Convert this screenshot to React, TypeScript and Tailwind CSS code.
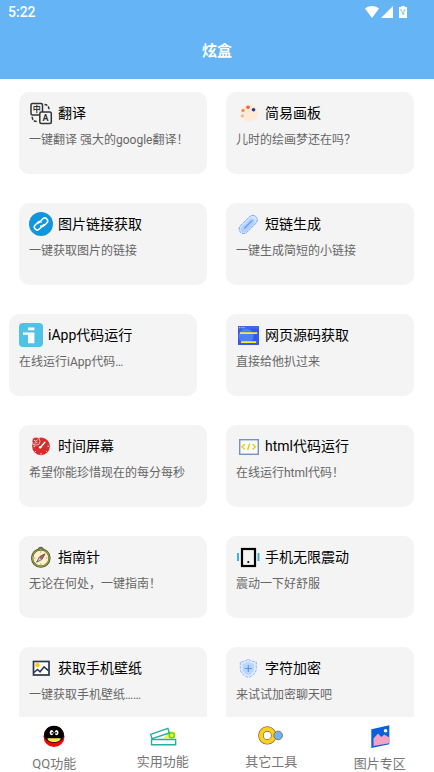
import React, { useState } from 'react';

interface Tool {
  title: string;
  desc: string;
  icon: React.ReactNode;
  className?: string;
}

interface Tab {
  label: string;
  icon: React.ReactNode;
}

const iconClass = 'w-6 h-6 shrink-0';

const TranslateIcon = () => (
  <svg viewBox="0 0 24 24" className={iconClass} fill="none" stroke="#333" strokeWidth="1.5" aria-hidden="true">
    <rect x="2" y="2.5" width="11.5" height="11.5" rx="1.5" />
    <rect x="10.8" y="11" width="11.5" height="11.5" rx="1.5" fill="#f4f4f4" />
    <path d="M15.500 3.500c2.600 0 4.500 1.800 4.500 4.800" strokeDasharray="3 1.200" />
    <path d="M3.200 15.800c0 3 1.900 4.800 5 4.800" strokeDasharray="3 1.200" />
    <text x="7.8" y="11.2" fontSize="8" fontWeight="700" textAnchor="middle" fill="#333" stroke="none">中</text>
    <text x="16.6" y="20.1" fontSize="9" fontWeight="700" textAnchor="middle" fill="#333" stroke="none">A</text>
  </svg>
);

const PaletteIcon = () => (
  <svg viewBox="0 0 24 24" className={iconClass} aria-hidden="true">
    <path d="M13.500 3.500a8.600 8.600 0 1 1-5 15.600c-1.400-1 .6-2.100-.3-3.200-.8-1-2.600.2-2.800-2.200C4.800 8 8.500 3.500 13.500 3.500z" fill="#feead6" />
    <circle cx="7" cy="9.400" r="1.700" fill="#fd8a4c" />
    <circle cx="12" cy="6.300" r="1.800" fill="#fb5f3b" />
    <circle cx="17.500" cy="8.700" r="1.800" fill="#2f3689" />
    <circle cx="6.300" cy="14.900" r="1.600" fill="#fcb37c" />
  </svg>
);

const LinkIcon = () => (
  <svg viewBox="0 0 24 24" className={iconClass} fill="none" aria-hidden="true">
    <circle cx="12" cy="12" r="12" fill="#1296db" />
    <g stroke="#fff" strokeWidth="1.500" strokeLinecap="round" transform="translate(12 12) rotate(-45)">
      <path d="M1.800 2.400H-4.800a2.900 2.900 0 0 1 0-5.800H-1.200a2.900 2.900 0 0 1 2.800 2.200" />
      <path d="M-1.800-2.400H4.800a2.900 2.900 0 0 1 0 5.800H1.200a2.900 2.900 0 0 1-2.800-2.200" />
    </g>
  </svg>
);

const ClipIcon = () => (
  <svg viewBox="0 0 24 24" className={iconClass} fill="none" aria-hidden="true">
    <g transform="translate(12.200 12.500) rotate(-45)">
      <rect x="-11" y="-4.600" width="22" height="9.200" rx="4.600" fill="#d3e3fe" stroke="#5b9af8" strokeWidth=".8" strokeDasharray="3 .8" />
      <rect x="-9.500" y="-2.800" width="17" height="6.600" rx="3.300" fill="#b3cffd" />
      <path d="M-5 0H5.500" stroke="#5f9cf8" strokeWidth="1.300" strokeLinecap="round" />
    </g>
  </svg>
);

const IAppIcon = () => (
  <svg viewBox="0 0 24 24" className={iconClass} aria-hidden="true">
    <rect width="24" height="24" rx="4" fill="#4ec3e6" />
    <path d="M9 4.600h6.400v2.600H9zM4 9.500h11.400v10.700H9v-8.500H4z" fill="#fff" />
  </svg>
);

const WebSourceIcon = () => (
  <svg viewBox="0 0 24 24" className={iconClass} aria-hidden="true">
    <rect x="2" y="3" width="21" height="19" rx=".5" fill="#3558f5" />
    <circle cx="10" cy="13" r="7.500" fill="#4a80fb" />
    <path d="M2 3h21v2.500H2z" fill="#4466e8" />
    <path d="M3 4h1.300v1.200H3zM5.200 4h1.300v1.200H5.200zM7.400 4h1.300v1.200H7.400z" fill="#e8b94a" />
    <path d="M4 9.200h17.200V11H4zM5 18.200h15.200V20H5z" fill="#ffee1a" />
  </svg>
);

const ClockIcon = () => (
  <svg viewBox="0 0 24 24" className={iconClass} fill="none" aria-hidden="true">
    <circle cx="12" cy="12.300" r="8.900" fill="#dc2b2f" />
    <path d="M12 19v1.500M18.500 12.300h1.500M4.500 12.300H6M17 17l.8.8M6.800 17.200l-.8.8" stroke="#fff" strokeWidth=".9" />
    <path d="M11.300 13.500l4.600-5.300" stroke="#fff" strokeWidth="1.300" strokeLinecap="round" />
    <circle cx="11.200" cy="13.200" r="1.300" fill="#fff" />
    <circle cx="7" cy="7.200" r="4" fill="#dc2b2f" stroke="#f9d9d9" strokeWidth=".8" />
    <path d="M5 6.200l2 1.200 1.800-2M5.500 9.200l2.800-.8" stroke="#fff" strokeWidth=".8" />
  </svg>
);

const HtmlIcon = () => (
  <svg viewBox="0 0 24 24" className={iconClass} fill="none" aria-hidden="true">
    <rect x="3.700" y="5.700" width="18.600" height="14.600" fill="#fafafa" stroke="#7391c8" strokeWidth="1.400" />
    <path d="M8.800 10.200L6 12.800l2.800 2.600M16.600 10.200l2.800 2.600-2.800 2.600M13.800 9.600l-2.200 6.400" stroke="#e3cf0c" strokeWidth="1.400" />
  </svg>
);

const CompassIcon = () => (
  <svg viewBox="0 0 24 24" className={iconClass} fill="none" aria-hidden="true">
    <path d="M9.500 4.600a2.300 2.300 0 0 1 4.600 0" stroke="#5b6b4a" strokeWidth="1.200" />
    <circle cx="11.800" cy="13" r="8.700" fill="#fff0cd" stroke="#4a4f2c" strokeWidth="2.200" />
    <circle cx="11.800" cy="13" r="8.500" stroke="#98a83c" strokeWidth="1.100" />
    <path d="M11.800 6.500v1M11.800 18.500v1M5.300 13h1M17.300 13h1" stroke="#6b6b50" strokeWidth=".8" />
    <path d="M16 8.800l-2.700 5.200-2.500-2.500z" fill="#e4574c" stroke="#413c3c" strokeWidth=".7" />
    <path d="M7.600 17.200l2.700-5.200 2.500 2.500z" fill="#c9ced6" stroke="#413c3c" strokeWidth=".7" />
  </svg>
);

const VibrateIcon = () => (
  <svg viewBox="0 0 24 24" className={iconClass} fill="none" aria-hidden="true">
    <rect x="6" y="4" width="13" height="17" stroke="#000" strokeWidth="2.200" />
    <circle cx="12.300" cy="17" r="1.100" fill="#000" />
    <path d="M2 8v8M22.500 8v8" stroke="#29abe2" strokeWidth="1.800" />
  </svg>
);

const WallpaperIcon = () => (
  <svg viewBox="0 0 24 24" className={iconClass} fill="none" aria-hidden="true">
    <rect x="4.500" y="5.500" width="15.500" height="13.500" fill="#fff" stroke="#2b3650" strokeWidth="1.700" />
    <circle cx="8.500" cy="9" r="2.300" fill="#ffcb05" />
    <path d="M5 16.500l3.500-3 2.500 2.300 4-5 4.500 3.800" stroke="#2b3650" strokeWidth="1.600" />
  </svg>
);

const ShieldIcon = () => (
  <svg viewBox="0 0 24 24" className={iconClass} fill="none" aria-hidden="true">
    <path d="M12.300 3.300c2.300 1.700 5 2.500 8 2.700v6.500c0 4.500-3.500 7.300-8 9-4.500-1.700-8-4.500-8-9V6c3-.2 5.700-1 8-2.700z" fill="#e0ecff" stroke="#73a9fa" strokeWidth=".8" strokeDasharray="3 1" />
    <path d="M12.300 5.800c1.800 1.200 3.700 1.700 5.800 2v4.700c0 3.400-2.400 5.300-5.800 6.700-3.400-1.400-5.800-3.300-5.800-6.700V7.800c2.100-.3 4-.8 5.800-2z" fill="#b9d4fe" />
    <path d="M12.300 9v7M8.800 12.500h7" stroke="#4f93f7" strokeWidth="1.100" />
  </svg>
);

const QQIcon = () => (
  <svg viewBox="0 0 24 24" className={iconClass} aria-hidden="true">
    <circle cx="12" cy="11.500" r="10.500" fill="#f00" />
    <path d="M12 .8c5.700 0 9.900 4.200 9.900 9.400 0 4.300-4.200 7.500-9.900 7.500s-9.900-3.200-9.900-7.500C2.100 5 6.300.8 12 .8z" fill="#000" />
    <ellipse cx="9.600" cy="7.600" rx="1.900" ry="2.600" fill="#fff" />
    <ellipse cx="14.600" cy="7.600" rx="1.900" ry="2.600" fill="#fff" />
    <circle cx="10.200" cy="7.800" r=".9" fill="#000" />
    <circle cx="14" cy="7.800" r=".9" fill="#000" />
    <path d="M5.500 13.200h13.200c0 2.400-2.700 3.800-6.600 3.800s-6.600-1.400-6.600-3.800z" fill="#ffe94d" />
  </svg>
);

const RulerIcon = () => (
  <svg viewBox="0 0 32 24" className="w-8 h-6" fill="none" aria-hidden="true">
    <path d="M22.500 6.500l6.800 1v7H17z" fill="#f8f32b" />
    <circle cx="25.600" cy="11.300" r="2.800" stroke="#4fd62c" strokeWidth="1.400" />
    <path d="M2.500 10.300L21.300 3.700l1.600 5L4 15z" fill="#fff" stroke="#27ae9b" strokeWidth="1.500" />
    <path d="M3.500 15.800h26.300v5.700H3.500z" fill="#fff" stroke="#27ae9b" strokeWidth="1.500" />
  </svg>
);

const RingIcon = () => (
  <svg viewBox="0 0 32 24" className="w-8 h-6" aria-hidden="true">
    <circle cx="12" cy="11.400" r="7" fill="none" stroke="#8a5a44" strokeWidth="6" />
    <circle cx="12" cy="11.400" r="7" fill="none" stroke="#f8d21c" strokeWidth="4.500" />
    <circle cx="23.800" cy="11.400" r="4.700" fill="#6cb5ee" stroke="#8a5a44" strokeWidth=".9" />
  </svg>
);

const PictureIcon = () => (
  <svg viewBox="0 0 24 24" className={iconClass} aria-hidden="true">
    <path d="M3.300 4.200L21.300.2v19L3.300 23z" fill="#0b5fdb" />
    <path d="M5.500 13.500L10 8.600l3.300 3.300 2.900-2.400 5.100 3v5.800L5.500 21z" fill="#f2a3c4" />
    <circle cx="17.600" cy="5.700" r="1.800" fill="#fff" />
  </svg>
);

const tools: Tool[] = [
  { title: '翻译', desc: '一键翻译 强大的google翻译！', icon: <TranslateIcon /> },
  { title: '简易画板', desc: '儿时的绘画梦还在吗？', icon: <PaletteIcon /> },
  { title: '图片链接获取', desc: '一键获取图片的链接', icon: <LinkIcon /> },
  { title: '短链生成', desc: '一键生成简短的小链接', icon: <ClipIcon /> },
  { title: 'iApp代码运行', desc: '在线运行iApp代码…', icon: <IAppIcon />, className: '-ml-[10px] mr-[10px]' },
  { title: '网页源码获取', desc: '直接给他扒过来', icon: <WebSourceIcon /> },
  { title: '时间屏幕', desc: '希望你能珍惜现在的每分每秒', icon: <ClockIcon /> },
  { title: 'html代码运行', desc: '在线运行html代码！', icon: <HtmlIcon /> },
  { title: '指南针', desc: '无论在何处，一键指南！', icon: <CompassIcon /> },
  { title: '手机无限震动', desc: '震动一下好舒服', icon: <VibrateIcon /> },
  { title: '获取手机壁纸', desc: '一键获取手机壁纸……', icon: <WallpaperIcon /> },
  { title: '字符加密', desc: '来试试加密聊天吧', icon: <ShieldIcon /> },
];

const tabs: Tab[] = [
  { label: 'QQ功能', icon: <QQIcon /> },
  { label: '实用功能', icon: <RulerIcon /> },
  { label: '其它工具', icon: <RingIcon /> },
  { label: '图片专区', icon: <PictureIcon /> },
];

function StatusBar() {
  return (
    <div className="flex h-6 items-center justify-between pl-2 pr-[27px]">
      <span className="text-sm font-medium">5:22</span>
      <div className="flex items-center">
        <svg viewBox="0 0 14 12" className="w-[14px] h-3" fill="#fff" aria-hidden="true">
          <path d="M7 0c2.800 0 5.200 1 7 2.600L7 12 0 2.600C1.800 1 4.200 0 7 0z" />
        </svg>
        <svg viewBox="0 0 12 12" className="w-3 h-3 ml-0.5" fill="#fff" aria-hidden="true">
          <path d="M12 0v12H0z" />
        </svg>
        <svg viewBox="0 0 8 12" className="w-2 h-3 ml-1.5" aria-hidden="true">
          <path d="M2.300 0h3.400v1H8v11H0V1h2.300z" fill="#fff" />
          <path d="M2 3.200v1.600h1.200M6 3.200v1.600H4.800M4.600 5L3 7h2L3.800 9.200" fill="none" stroke="#64b4f6" strokeWidth=".9" />
        </svg>
      </div>
    </div>
  );
}

function ToolCard({ title, desc, icon, className = '' }: Tool) {
  return (
    <button
      type="button"
      className={`flex h-[82px] flex-col items-start rounded-[10px] bg-[#f4f4f4] px-[10px] pt-[9px] text-left ${className}`}
    >
      <span className="flex items-center gap-[5px]">
        {icon}
        <span className="text-sm leading-6 text-black">{title}</span>
      </span>
      <span className="mt-[5px] text-xs leading-5 text-[#666]">{desc}</span>
    </button>
  );
}

export default function App() {
  const [activeTab, setActiveTab] = useState(1);

  return (
    <div className="flex h-screen flex-col bg-white font-[Roboto,'Noto_Sans_CJK_SC',sans-serif]">
      <header className="shrink-0 bg-[#64b4f6] text-white">
        <StatusBar />
        <h1 className="h-[55px] text-center text-[15px] font-bold leading-[54px]">炫盒</h1>
      </header>

      {/* Список инструментов */}
      <main className="min-h-0 flex-1 overflow-y-auto pl-[19px] pr-5 pt-[13px] [scrollbar-width:none]">
        <div className="grid grid-cols-2 gap-x-[19px] gap-y-[29px]">
          {tools.map((tool) => (
            <ToolCard key={tool.title} {...tool} />
          ))}
        </div>
      </main>

      {/* Нижняя навигация */}
      <nav className="grid shrink-0 grid-cols-4 bg-white">
        {tabs.map((tab, i) => (
          <button
            key={tab.label}
            type="button"
            aria-current={i === activeTab ? 'page' : undefined}
            onClick={() => setActiveTab(i)}
            className="flex h-[55px] flex-col items-center pt-2 text-[#777]"
          >
            {tab.icon}
            <span className="mt-[5px] text-[13px] leading-5">{tab.label}</span>
          </button>
        ))}
      </nav>
    </div>
  );
}
